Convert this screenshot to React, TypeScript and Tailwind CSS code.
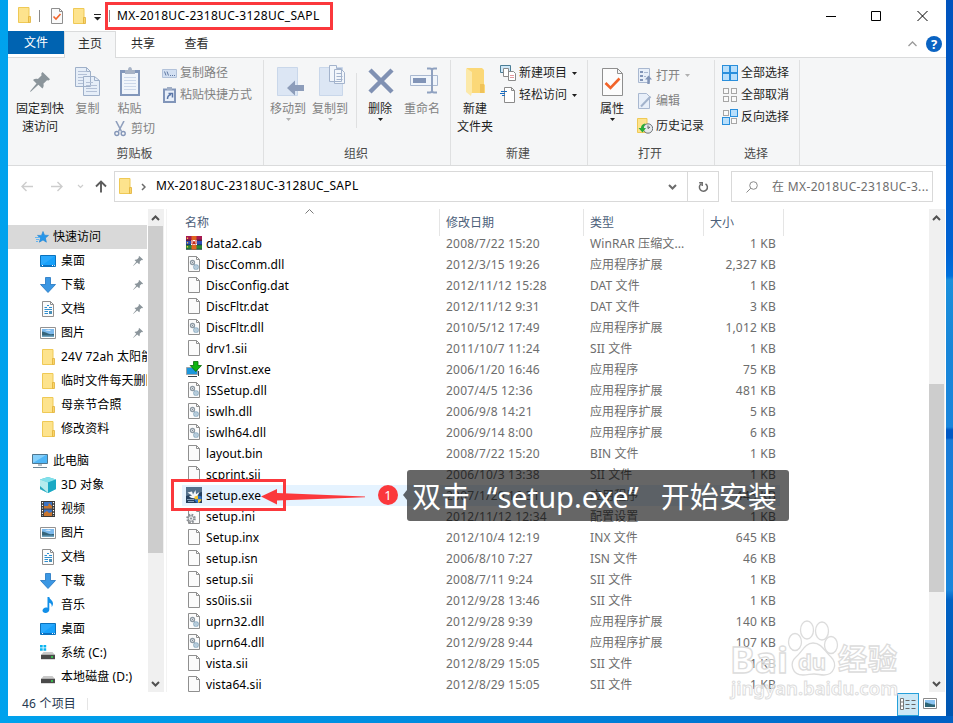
import type { ReactNode } from "react"

interface FileRow {
  icon: string
  name: string
  date: string
  type: string
  size: string
}

interface NavEntry {
  icon: string
  label: string
  pinned?: boolean
}

const files: FileRow[] = [
  { icon: "rar", name: "data2.cab", date: "2008/7/22 15:20", type: "WinRAR 压缩文...", size: "1 KB" },
  { icon: "dll", name: "DiscComm.dll", date: "2012/3/15 19:26", type: "应用程序扩展", size: "2,327 KB" },
  { icon: "file", name: "DiscConfig.dat", date: "2012/11/12 15:28", type: "DAT 文件", size: "1 KB" },
  { icon: "file", name: "DiscFltr.dat", date: "2012/11/12 9:31", type: "DAT 文件", size: "3 KB" },
  { icon: "dll", name: "DiscFltr.dll", date: "2010/5/12 17:49", type: "应用程序扩展", size: "1,012 KB" },
  { icon: "file", name: "drv1.sii", date: "2011/10/7 11:24", type: "SII 文件", size: "1 KB" },
  { icon: "inst", name: "DrvInst.exe", date: "2006/1/20 16:46", type: "应用程序", size: "75 KB" },
  { icon: "dll", name: "ISSetup.dll", date: "2007/4/5 12:36", type: "应用程序扩展", size: "481 KB" },
  { icon: "dll", name: "iswlh.dll", date: "2006/9/8 14:21", type: "应用程序扩展", size: "5 KB" },
  { icon: "dll", name: "iswlh64.dll", date: "2006/9/14 8:00", type: "应用程序扩展", size: "6 KB" },
  { icon: "file", name: "layout.bin", date: "2008/7/22 15:20", type: "BIN 文件", size: "1 KB" },
  { icon: "file", name: "scprint.sii", date: "2006/10/3 13:38", type: "SII 文件", size: "1 KB" },
  { icon: "setup", name: "setup.exe", date: "2007/1/20 16:31", type: "应用程序", size: "445 KB" },
  { icon: "ini", name: "setup.ini", date: "2012/11/12 12:34", type: "配置设置", size: "1 KB" },
  { icon: "file", name: "Setup.inx", date: "2012/10/4 12:19", type: "INX 文件", size: "645 KB" },
  { icon: "file", name: "setup.isn", date: "2006/8/10 7:27", type: "ISN 文件", size: "46 KB" },
  { icon: "file", name: "setup.sii", date: "2008/7/11 9:24", type: "SII 文件", size: "1 KB" },
  { icon: "file", name: "ss0iis.sii", date: "2012/9/28 13:46", type: "SII 文件", size: "1 KB" },
  { icon: "dll", name: "uprn32.dll", date: "2012/9/28 9:39", type: "应用程序扩展", size: "140 KB" },
  { icon: "dll", name: "uprn64.dll", date: "2012/9/28 9:44", type: "应用程序扩展", size: "107 KB" },
  { icon: "file", name: "vista.sii", date: "2012/8/29 15:05", type: "SII 文件", size: "1 KB" },
  { icon: "file", name: "vista64.sii", date: "2012/8/29 15:05", type: "SII 文件", size: "1 KB" },
]

const quickAccess: NavEntry[] = [
  { icon: "desktop", label: "桌面", pinned: true },
  { icon: "download", label: "下载", pinned: true },
  { icon: "doc", label: "文档", pinned: true },
  { icon: "picture", label: "图片", pinned: true },
  { icon: "folder", label: "24V 72ah 太阳能" },
  { icon: "folder", label: "临时文件每天删除" },
  { icon: "folder", label: "母亲节合照" },
  { icon: "folder", label: "修改资料" },
]

const thisPc: NavEntry[] = [
  { icon: "cube", label: "3D 对象" },
  { icon: "video", label: "视频" },
  { icon: "picture", label: "图片" },
  { icon: "doc", label: "文档" },
  { icon: "download", label: "下载" },
  { icon: "music", label: "音乐" },
  { icon: "desktop", label: "桌面" },
  { icon: "sysdisk", label: "系统 (C:)" },
  { icon: "disk", label: "本地磁盘 (D:)" },
]

const page = (
  <path d="M2.500 .5h8l3 3v12h-11z M10.500 .5v3h3" fill="#fbfbfb" stroke="#8f8f8f" />
)

// 16x16 icons shared by the navigation pane and the file list
function Icon({ name }: { name: string }) {
  return (
    <svg width="16" height="16" viewBox="0 0 16 16" className="shrink-0">
      {name === "file" && page}
      {name === "dll" && (
        <>
          {page}
          <circle cx="6.500" cy="6.500" r="2" fill="#fff" stroke="#8d99a3" strokeWidth="1.300" />
          <circle cx="6.500" cy="6.500" r=".7" fill="#7e8b96" />
          <path d="M7.500 8l2 1.500" stroke="#8d99a3" />
          <circle cx="10" cy="11" r="2.200" fill="#e4f1fa" stroke="#96b4c8" strokeWidth="1.300" />
          <circle cx="10" cy="11" r=".8" fill="#7e9ab0" />
        </>
      )}
      {name === "ini" && (
        <>
          {page}
          <circle cx="5" cy="10.500" r="3.800" fill="none" stroke="#8a8f94" strokeWidth="2" strokeDasharray="1.700 1.300" />
          <circle cx="5" cy="10.500" r="2.800" fill="#e9eaeb" stroke="#90959a" />
          <circle cx="5" cy="10.500" r="1" fill="#8a8f94" />
        </>
      )}
      {name === "rar" && (
        <>
          <path d="M0 1h16v5H0z" fill="#a8194f" />
          <path d="M0 6h16v4H0z" fill="#2c4fb5" />
          <path d="M0 10h16v4.500H0z" fill="#2a8a35" />
          <path d="M0 5.200h16M0 9.800h16M0 14.200h16" stroke="#172a4a" strokeWidth=".8" />
          <path d="M5.500 1h5v13.500h-5z" fill="#e0641e" />
          <path d="M5 5h6v5H5z" fill="#fff" />
          <path d="M6 5v4h1.500V6.500h1V9H10V5" fill="none" stroke="#c42b1c" />
          <path d="M1.500 2.500v1.500M1.500 7v1.500M1.500 11v1.500" stroke="#f4c542" strokeWidth="1.200" />
        </>
      )}
      {name === "inst" && (
        <>
          <path d="M.5 6.500h11v7H.5z" fill="#1c97dc" stroke="#9aa3aa" />
          <path d="M2 15.500h9M12.500 10v5" stroke="#38444d" />
          <path d="M7.500 .5h4.500v4h3.500l-5.700 6L4.200 4.500h3.300z" fill="#10b410" stroke="#076b07" strokeWidth=".8" />
        </>
      )}
      {name === "setup" && (
        <>
          <path d="M0 0h16v16H0z" fill="#24405f" />
          <path d="M0 0h16v5L0 9z" fill="#54718c" />
          <path d="M1.500 5.500L6 4.500l1 3 2.500-4.500.5 4 3.500-2-2.500 5c-3 2-6 1.500-8-1l3-.5z" fill="#f3f7fb" />
          <path d="M1 12.500h7M2 14.500h6" stroke="#87a0b8" />
          <path d="M12 8.500l3.500 1v2.700H12z" fill="#2b76d2" />
          <path d="M8.500 12.200H12V16c-2-.7-3.300-2-3.500-3.800z" fill="#2b76d2" />
          <path d="M12 8.500v3.700H8.500V9.500zM12 12.200h3.500c-.2 1.800-1.500 3.100-3.500 3.800z" fill="#f7c431" />
        </>
      )}
      {name === "desktop" && (
        <>
          <path d="M.5 2.500h15v11H.5z" fill="#16a1fb" stroke="#0a72bd" />
          <path d="M1 13V3h14z" fill="#3db2ff" opacity=".5" />
          <path d="M1 12.500h14" stroke="#0b6fc2" />
          <path d="M2 12.500h1M12 12.500h1M14 12.500h.8" stroke="#fff" />
        </>
      )}
      {name === "download" && (
        <path d="M5.500 .5h5v7h5L8 15.500.5 7.500h5z" fill="#3b97e3" stroke="#2174c0" strokeWidth=".8" />
      )}
      {name === "doc" && (
        <>
          {page}
          <path d="M7 4.500h2M4.500 6.500H7M9 6.500h3M4.500 8.500h7.500M4.500 10.500H8M4.500 12.500H8" stroke="#2f8fd0" />
          <path d="M9 10h3v3H9z" fill="#4a90b8" />
        </>
      )}
      {name === "picture" && (
        <>
          <path d="M.5 2.500h15v11H.5z" fill="#fff" stroke="#929292" />
          <path d="M2 4h12v8H2z" fill="#7cb9ec" />
          <path d="M2 6.500c2 0 4 1 6 2s4 .5 6 .5v3H2z" fill="#35647a" />
          <path d="M2 10.500h12V12H2z" fill="#6fa3bf" />
          <path d="M5 5.500c2-1 5-1 6 .5z" fill="#e2f1fd" />
        </>
      )}
      {name === "folder" && (
        <>
          <path d="M2.500 .5h10.500v15H2.500z" fill="#fde38d" stroke="#efc955" />
          <path d="M12.500 9.500h2v6h-2z" fill="#fbd567" stroke="#dfb03a" strokeWidth=".8" />
        </>
      )}
      {name === "cube" && (
        <>
          <path d="M8 0l8 2.500V12l-8 4-8-4V2.500z" fill="#39bdd3" />
          <path d="M8 0l8 2.500-8 3-8-3z" fill="#82e0ea" />
          <path d="M0 2.500l8 3V16l-8-4z" fill="#b5ecee" />
          <path d="M0 9l8 7-8-4z" fill="#27a6bc" />
          <path d="M8 5.500l8-3V12l-8 4z" fill="#1ba9c4" />
        </>
      )}
      {name === "video" && (
        <>
          <path d="M1 0h14v16H1z" fill="#3a3a3a" />
          <path d="M4 1h8v6.500H4zM4 8.500h8V15H4z" fill="#3b73c4" />
          <path d="M4 5h4l1-3 3 3v2.500H4zM4 12l3-2 2 2 3-1v4H4z" fill="#c8752d" />
          <path d="M2.500 1v14M13.500 1v14" stroke="#fff" strokeWidth="1.200" strokeDasharray="1.200 1.500" />
        </>
      )}
      {name === "music" && (
        <path d="M7.500 0h1.800c.3 2.500 3.700 3.500 3.700 6.500 0 1.500-.6 2.700-1.300 3.500.3-2.500-.9-4-2.400-4.300v7c0 1.900-1.800 3.300-3.800 3.300-1.700 0-3-.9-3-2.400 0-1.700 1.700-3.100 3.500-3.100.5 0 1 .1 1.500.3z" fill="#128fe8" />
      )}
      {(name === "disk" || name === "sysdisk") && (
        <>
          <path d="M3.500 7h9l2.500 3H1z" fill="#c9c9c9" />
          <path d="M1 9.800h14v4.400H1z" fill="#4a4a4a" />
          <path d="M11 12h2" stroke="#35e04f" strokeWidth="1.500" />
        </>
      )}
      {name === "sysdisk" && (
        <path d="M0 0h2.700v2.500H0zM3.500 0h2.700v2.500H3.500zM0 3.300h2.700v2.500H0zM3.500 3.300h2.700v2.500H3.500z" fill="#0ab4f0" />
      )}
      {name === "star" && (
        <>
          <path d="M9 2.500l1.500 3.700 4 .2-3.100 2.600 1 4.200L9 11l-3.700 2.200 1.200-4L3.500 6.400h4z" fill="#2796ea" stroke="#1c83d4" strokeWidth=".6" />
          <path d="M1 8.500h5M2 10.500h3M2 12.500h2" stroke="#65b5ef" />
        </>
      )}
      {name === "pc" && (
        <>
          <path d="M.5 1.500h15v9H.5z" fill="#4fb6f7" stroke="#50778f" />
          <path d="M1 10V2h13z" fill="#86d0fb" />
          <path d="M6 11h4v2H6z" fill="#b4bec5" />
          <path d="M1 14.500h14" stroke="#6b8494" />
        </>
      )}
    </svg>
  )
}

function PinIcon({ size, color }: { size: number; color: string }) {
  return (
    <svg width={size} height={size} viewBox="0 0 20 20" className="shrink-0">
      <path d="M12.500 0L20 7.200l-1.400 1.200-1.600-.2-3.600 3.500c.6 1.800.2 3.600-1 4.800l-4-3.700L1 19.600l-1 .4.500-1.200 6-7.200L3 8c1.400-1.200 3.200-1.500 4.900-.9l3.600-3.700-.2-1.900z" fill={color} />
    </svg>
  )
}

function Caret({ color = "#1e1e1e" }: { color?: string }) {
  return (
    <svg width="5" height="3" viewBox="0 0 5 3" className="shrink-0">
      <path d="M0 0h5L2.500 3z" fill={color} />
    </svg>
  )
}

function Chevron({ up, color = "#505050" }: { up?: boolean; color?: string }) {
  return (
    <svg width="9" height="6" viewBox="0 0 9 6" className="shrink-0">
      <path d={up ? "M1 5l3.500-3.500L8 5" : "M1 1l3.500 3.500L8 1"} fill="none" stroke={color} strokeWidth="2" />
    </svg>
  )
}

function TitleBar() {
  return (
    <div className="flex h-[31px] items-center">
      <div className="ml-[8px] flex w-[91px] shrink-0 items-center">
        <div className="mb-px"><Icon name="folder" /></div>
        <div className="ml-[7px] h-3 w-px bg-[#8a8a8a]" />
        <svg width="12" height="16" viewBox="0 0 12 16" className="ml-[11px]">
          <path d="M.5 .5h8l3 3v12H.5z M8.500 .5v3h3" fill="#fafafa" stroke="#8f8f8f" />
          <path d="M2.500 8.500l2.500 2.500 4.500-5" fill="none" stroke="#f2642a" strokeWidth="1.600" />
        </svg>
        <div className="ml-[8px]"><Icon name="folder" /></div>
        <svg width="7" height="7" viewBox="0 0 7 7" className="mt-[3px] ml-[7px]">
          <path d="M0 .5h7" stroke="#222" />
          <path d="M0 3h7L3.500 6.500z" fill="#222" />
        </svg>
      </div>
      <div className="ml-[2px] h-3 w-px bg-[#8a8a8a]" />
      <span className="ml-[7px] tracking-[0.3px] text-black">MX-2018UC-2318UC-3128UC_SAPL</span>
      <svg width="110" height="12" viewBox="0 0 110 12" className="mr-[14px] ml-auto">
        <path d="M4 6.500h10M49.500 1.500h9v9h-9zM95.500 1l10 10M105.500 1l-10 10" fill="none" stroke="#000" />
      </svg>
    </div>
  )
}

function Tabs() {
  return (
    <div className="flex h-[27px] border-b border-[#dadbdc] text-[#2b2b2b]">
      <div className="h-[23px] w-[56px] bg-[#0063b1] text-center leading-[23px] text-white">文件</div>
      <div className="h-[27px] w-[52px] border-x border-t border-[#dadbdc] bg-[#f5f6f7] text-center leading-[24px]">主页</div>
      <div className="w-[54px] text-center leading-[26px]">共享</div>
      <div className="w-[53px] text-center leading-[26px]">查看</div>
      <div className="mr-[4px] ml-auto flex items-center gap-[9px]">
        <svg width="9" height="6" viewBox="0 0 9 6">
          <path d="M.5 5l4-4 4 4" fill="none" stroke="#9a9a9a" strokeWidth="1.300" />
        </svg>
        <div className="h-4 w-4 rounded-full bg-[#0a63c2] text-center text-[13px] leading-4 font-bold text-white">?</div>
      </div>
    </div>
  )
}

function Group({ label, width, children }: { label: string; width: string; children: ReactNode }) {
  return (
    <div className={`flex shrink-0 flex-col border-r border-[#dfe0e1] ${width}`}>
      <div className="flex h-[84px]">{children}</div>
      <div className="h-[18px] pr-[2px] text-center leading-[20px] text-[#4a4a4a]">{label}</div>
    </div>
  )
}

function BigButton({ icon, lines, width, disabled, caret }: { icon: ReactNode; lines: string[]; width: string; disabled?: boolean; caret?: boolean }) {
  return (
    <div className={`flex shrink-0 flex-col items-center whitespace-nowrap ${width} ${disabled ? "text-[#828282]" : "text-[#1e1e1e]"}`}>
      <div className="flex h-[40px] items-center justify-center pt-[3px]">{icon}</div>
      {lines.map((line) => (
        <span key={line} className="h-[18px] leading-[18px]">{line}</span>
      ))}
      {caret && <Caret color={disabled ? "#b0b0b0" : "#1e1e1e"} />}
    </div>
  )
}

function SmallButton({ icon, label, height, disabled, caret }: { icon: ReactNode; label: string; height: string; disabled?: boolean; caret?: boolean }) {
  return (
    <div className={`flex items-center whitespace-nowrap ${height} ${disabled ? "text-[#828282]" : "text-[#1e1e1e]"}`}>
      <div className="mr-[3px] flex w-4 justify-center">{icon}</div>
      <span className="mr-[5px]">{label}</span>
      {caret && <Caret color={disabled ? "#b0b0b0" : "#1e1e1e"} />}
    </div>
  )
}

function SelectIcon({ on }: { on: number[] }) {
  return (
    <svg width="16" height="16" viewBox="0 0 16 16">
      {[0, 1, 2, 3].map((i) => (
        <rect
          key={i}
          x={(i % 2) * 8 + (on.includes(i) ? 0.5 : 1.5)}
          y={Math.floor(i / 2) * 8 + (on.includes(i) ? 0.5 : 1.5)}
          width={on.includes(i) ? 7 : 5}
          height={on.includes(i) ? 7 : 5}
          fill={on.includes(i) ? "#b9dffb" : "#fafafa"}
          stroke={on.includes(i) ? "#2a8fdc" : "#a6a6a6"}
        />
      ))}
    </svg>
  )
}

function Ribbon() {
  return (
    <div className="flex h-[108px] border-b border-[#dadbdc] bg-[#f5f6f7] pt-[2px]">
      <Group label="剪贴板" width="w-[256px]">
        <BigButton width="w-[64px]" icon={<PinIcon size={20} color="#8b959b" />} lines={["固定到快", "速访问"]} />
        <BigButton
          width="w-[31px]"
          disabled
          icon={
            <svg width="25" height="29" viewBox="0 0 25 29">
              <path d="M.5 .5h11l4 4v15H.5zM8.500 9.500h11l5 4v15h-16z" fill="#e6eef8" stroke="#9fb0c9" />
              <path d="M3 4.500h8M3 7.500h9M3 10.500h5M3 13.500h5M3 16.500h5M11 15.500h7M11 18.500h11M11 21.500h11M11 24.500h11" stroke="#b3c0d6" />
              <path d="M19.500 9.500v4h5M11.500 .5v4h4" fill="none" stroke="#9fb0c9" />
            </svg>
          }
          lines={["复制"]}
        />
        <div className="flex w-[58px] shrink-0 flex-col pl-[11px]">
          <BigButton
            width="w-[31px]"
            disabled
            icon={
              <svg width="20" height="29" viewBox="0 0 20 29">
                <path d="M0 3h20v26H0z" fill="#8297bb" />
                <path d="M2 6h16v21H2z" fill="#f0f5fb" />
                <path d="M4 10.500h12M4 13.500h12M4 16.500h12M4 19.500h12M4 22.500h12" stroke="#ccd8ea" />
                <path d="M5 3h3c0-4 4-4 4 0h3v4H5z" fill="#a7b3c6" />
              </svg>
            }
            lines={["粘贴"]}
          />
          <div className="mt-px flex h-[20px] items-center text-[#828282]">
            <svg width="12" height="16" viewBox="0 0 12 16" className="mr-[5px] shrink-0">
              <path d="M2 0l5.500 10.500M10 0L4.500 10.500" fill="none" stroke="#8f9fbd" strokeWidth="1.600" />
              <circle cx="2.800" cy="12.500" r="2" fill="none" stroke="#8496b8" strokeWidth="1.400" />
              <circle cx="9.200" cy="12.500" r="2" fill="none" stroke="#8496b8" strokeWidth="1.400" />
            </svg>
            <span className="whitespace-nowrap">剪切</span>
          </div>
        </div>
        <div className="pt-[2px]">
          <SmallButton
            height="h-[22px]"
            disabled
            icon={
              <svg width="15" height="9" viewBox="0 0 15 9">
                <path d="M.5 .5h14v8H.5z" fill="#d3e0f2" stroke="#b2c2da" />
                <path d="M2.500 2.500l1.500 4M5 2.500l1.500 4M8 6.500h1M10 6.500h1M12 6.500h1" stroke="#5f78a3" />
              </svg>
            }
            label="复制路径"
          />
          <SmallButton
            height="h-[22px]"
            disabled
            icon={
              <svg width="13" height="16" viewBox="0 0 13 16">
                <path d="M1 2.500h11v12.500H1z" fill="#e8eff9" stroke="#8195b9" strokeWidth="2" />
                <path d="M4 0h5v3H4z" fill="#a0aec6" />
                <path d="M4.500 12c0-3 1-4 3.500-4.500M5.500 6.500h4v4" fill="none" stroke="#5b77a8" strokeWidth="1.500" />
              </svg>
            }
            label="粘贴快捷方式"
          />
        </div>
      </Group>

      <Group label="组织" width="w-[187px]">
        <BigButton
          width="ml-[3px] w-[42px]"
          disabled
          caret
          icon={
            <svg width="27" height="29" viewBox="0 0 27 29" className="ml-[4px]">
              <path d="M.5 .5h20v28H.5z" fill="#dce6f4" stroke="#c9d7ea" />
              <path d="M10 21l8-7.500v4.500h9v6h-9v4.500z" fill="#8d9dba" />
            </svg>
          }
          lines={["移动到"]}
        />
        <BigButton
          width="w-[42px]"
          disabled
          caret
          icon={
            <svg width="27" height="31" viewBox="0 0 27 31" className="-mt-[2px] ml-[5px]">
              <path d="M.5 2.500h23v28H.5z" fill="#dce6f4" stroke="#c9d7ea" />
              <path d="M10.500 .5h7v3h5v13h-12zM15.500 4.500h7l3 3v11h-10z" fill="#f2f6fb" stroke="#a3b3cc" />
              <path d="M17.500 8.500h5M17.500 11.500h6M17.500 14.500h6" stroke="#a3b3cc" />
            </svg>
          }
          lines={["复制到"]}
        />
        <div className="mt-[13px] ml-[5px] h-[55px] w-px bg-[#dfe0e1]" />
        <BigButton
          width="ml-[2px] w-[42px]"
          caret
          icon={
            <svg width="26" height="26" viewBox="0 0 26 26" className="-mt-[2px] ml-[2px]">
              <path d="M2 2l22 22M24 2L2 24" stroke="#8091b3" strokeWidth="4.500" />
            </svg>
          }
          lines={["删除"]}
        />
        <BigButton
          width="w-[42px]"
          disabled
          icon={
            <svg width="28" height="27" viewBox="0 0 28 27" className="-mt-[2px] ml-[4px]">
              <path d="M.5 8.500h27v10H.5z" fill="#f0f5fb" stroke="#a9b8d0" />
              <path d="M3 11h13v5H3z" fill="#8194b7" />
              <path d="M17 1.500h3c1.500 0 2 .5 2 2v20c0 1.500-.5 2-2 2h-3M27 1.500h-3c-1.500 0-2 .5-2 2M27 25.500h-3c-1.500 0-2-.5-2-2" fill="none" stroke="#8fa1c0" strokeWidth="2" />
            </svg>
          }
          lines={["重命名"]}
        />
      </Group>

      <Group label="新建" width="w-[137px]">
        <BigButton
          width="ml-[3px] w-[42px]"
          icon={
            <svg width="19" height="28" viewBox="0 0 19 28">
              <path d="M1 0h15l2 2v14l1 1v8H5L1 21z" fill="#fbd878" />
              <path d="M0 0l6 4v20l-1 4-5-4z" fill="#fce9a9" />
              <path d="M14 16h4v9h-4z" fill="#f0c35a" />
            </svg>
          }
          lines={["新建", "文件夹"]}
        />
        <div className="ml-[4px] pt-[2px]">
          <SmallButton
            height="h-[22px]"
            caret
            icon={
              <svg width="16" height="16" viewBox="0 0 16 16">
                <path d="M.5 .5h10v7H.5z" fill="#cfe8f8" stroke="#4a7d96" />
                <path d="M3.500 3.500h5v8h-5zM8.500 6.500h5l2 2v7h-7z" fill="#fff" stroke="#8a8a8a" />
                <path d="M10 10.500h4M10 12.500h4" stroke="#e39aa0" />
              </svg>
            }
            label="新建项目"
          />
          <SmallButton
            height="h-[22px]"
            caret
            icon={
              <svg width="16" height="16" viewBox="0 0 16 16">
                <path d="M4.500 .5h7l3 3v12h-10z M11.500 .5v3h3" fill="#fff" stroke="#8a8a8a" />
                <path d="M1 4.500h6M0 6.500h5M2 8.500h3" stroke="#1b6ec2" strokeWidth="1.200" />
              </svg>
            }
            label="轻松访问"
          />
        </div>
      </Group>

      <Group label="打开" width="w-[127px]">
        <BigButton
          width="ml-[3px] w-[42px]"
          caret
          icon={
            <svg width="21" height="28" viewBox="0 0 21 28">
              <path d="M.5 .5h15l5 5v22H.5z M15.500 .5v5h5" fill="#fcfcfc" stroke="#8f8f8f" />
              <path d="M3.500 15l5 5 9-9.500" fill="none" stroke="#f2642a" strokeWidth="2.600" />
            </svg>
          }
          lines={["属性"]}
        />
        <div className="ml-[4px] pt-[3px]">
          <SmallButton
            height="h-[25px]"
            disabled
            caret
            icon={
              <svg width="14" height="16" viewBox="0 0 14 16">
                <path d="M.5 .5h11v14H.5z" fill="#e8eff9" stroke="#a9b8d0" />
                <path d="M2 3h3v2H2zM2 7h3v2H2zM2 11h3v2H2z" fill="#8194b7" />
                <path d="M6 4.500h4M6 8.500h2" stroke="#a9b8d0" />
                <path d="M10.500 7.500l3.500 4h-2.300V16H9.300v-4.500H7z" fill="#8194b7" />
              </svg>
            }
            label="打开"
          />
          <SmallButton
            height="h-[25px]"
            disabled
            icon={
              <svg width="14" height="16" viewBox="0 0 14 16">
                <path d="M.5 .5h8l3 3v12H.5z" fill="#e8eff9" stroke="#a9b8d0" />
                <path d="M3 13.500L12.500 3.500" stroke="#a3b3cc" strokeWidth="2" />
              </svg>
            }
            label="编辑"
          />
          <SmallButton
            height="h-[25px]"
            icon={
              <svg width="16" height="16" viewBox="0 0 16 16" className="shrink-0">
                <path d="M.5 .5H10v14H.5z" fill="#fde38d" stroke="#efc955" />
                <circle cx="11" cy="10.500" r="4.700" fill="#e6e9eb" stroke="#6f7579" />
                <path d="M11 7.500v3l2-1.500" fill="none" stroke="#565b5f" />
                <path d="M8 5.500c-3 .5-4 2.500-4 4.500H1.500l4 4.500 3.500-4.500H6.700c0-2 .5-3 2-4z" fill="#28ad3a" />
              </svg>
            }
            label="历史记录"
          />
        </div>
      </Group>

      <Group label="选择" width="w-[85px]">
        <div className="ml-[7px] pt-[2px]">
          <SmallButton height="h-[22px]" icon={<SelectIcon on={[0, 1, 2, 3]} />} label="全部选择" />
          <SmallButton height="h-[22px]" icon={<SelectIcon on={[]} />} label="全部取消" />
          <SmallButton height="h-[22px]" icon={<SelectIcon on={[1, 2]} />} label="反向选择" />
        </div>
      </Group>
    </div>
  )
}

function AddressBar() {
  return (
    <div className="flex h-[43px] pt-[5px]">
      <svg width="106" height="31" viewBox="0 0 106 31" className="shrink-0">
        <path d="M25 15.500H14M18.500 11L14 15.500l4.500 4.500M43 15.500h11M49.500 11l4.500 4.500-4.500 4.500" fill="none" stroke="#cdcdcd" strokeWidth="1.400" />
        <path d="M70 14l2.500 2.500L75 14" fill="none" stroke="#cdcdcd" strokeWidth="1.200" />
        <path d="M93 21.500V10.500M88 15.500l5-5 5 5" fill="none" stroke="#5c5c5c" strokeWidth="1.900" />
      </svg>
      <div className="flex h-[31px] w-[605px] shrink-0 items-center border border-[#d9d9d9]">
        <div className="mb-px ml-[2px]"><Icon name="folder" /></div>
        <svg width="5" height="8" viewBox="0 0 5 8" className="ml-[8px]">
          <path d="M1 1l3 3-3 3" fill="none" stroke="#6b6b6b" strokeWidth="1.500" />
        </svg>
        <span className="mb-px ml-[10px] tracking-[0.3px] text-black">MX-2018UC-2318UC-3128UC_SAPL</span>
        <div className="mr-[10px] ml-auto"><Chevron color="#6b6b6b" /></div>
        <div className="flex h-full w-[31px] items-center justify-center border-l border-[#d9d9d9]">
          <svg width="11" height="12" viewBox="0 0 11 12">
            <path d="M7.500 2.800A4 4 0 1 1 3 3M1.200 1.800H4.200V5" fill="none" stroke="#6b6b6b" strokeWidth="1.500" />
          </svg>
        </div>
      </div>
      <div className="ml-[12px] flex h-[31px] w-[202px] shrink-0 items-center border border-[#d9d9d9] text-[#6d6d6d]">
        <svg width="12" height="12" viewBox="0 0 12 12" className="ml-[14px] shrink-0">
          <circle cx="7.500" cy="4.500" r="3.800" fill="none" stroke="#8a8a8a" />
          <path d="M4.800 7.200L.5 11.500" stroke="#8a8a8a" />
        </svg>
        <span className="ml-[14px] tracking-[0.35px] whitespace-nowrap">在 MX-2018UC-2318UC-3...</span>
      </div>
    </div>
  )
}

function NavItem({ icon, label, pinned }: NavEntry) {
  return (
    <div className="flex h-6 items-center overflow-hidden pl-[32px] whitespace-nowrap">
      <Icon name={icon} />
      <span className="ml-[5px] tracking-[0.1px]">{label}</span>
      {pinned && (
        <div className="mr-[4px] ml-auto">
          <PinIcon size={10} color="#8b959b" />
        </div>
      )}
    </div>
  )
}

function NavPane() {
  return (
    <div className="w-[139px] shrink-0 overflow-hidden pt-[16px] text-black">
      <div className="flex h-6 items-center bg-[#d9d9d9] pl-[26px]">
        <Icon name="star" />
        <span className="ml-[3px]">快速访问</span>
      </div>
      {quickAccess.map((entry) => (
        <NavItem key={entry.label} {...entry} />
      ))}
      <div className="mt-2 flex h-6 items-center pl-[24px]">
        <Icon name="pc" />
        <span className="ml-[5px]">此电脑</span>
      </div>
      {thisPc.map((entry) => (
        <NavItem key={entry.label} {...entry} />
      ))}
    </div>
  )
}

function Scrollbar({ thumb }: { thumb: string }) {
  return (
    <div className="flex h-[483px] w-4 shrink-0 flex-col bg-[#f0f0f0]">
      <div className="flex h-[17px] shrink-0 items-center justify-center pr-px"><Chevron up /></div>
      <div className={`w-[15px] bg-[#cdcdcd] ${thumb}`} />
      <div className="mt-auto flex h-[17px] shrink-0 items-center justify-center pr-px"><Chevron /></div>
    </div>
  )
}

function FileList() {
  return (
    <div className="flex-1">
      <div className="flex h-[24px] text-[#4c607a]">
        <div className="flex h-[27px] w-[273px] justify-between border-r border-[#e5e5e5] pl-[18px] leading-[28px]">
          名称
          <svg width="9" height="5" viewBox="0 0 9 5" className="mr-[125px]">
            <path d="M.5 4.500l4-4 4 4" fill="none" stroke="#7a7a7a" />
          </svg>
        </div>
        <div className="h-[27px] w-[144px] border-r border-[#e5e5e5] pl-[6px] leading-[28px]">修改日期</div>
        <div className="h-[27px] w-[120px] border-r border-[#e5e5e5] pl-[6px] leading-[28px]">类型</div>
        <div className="h-[27px] w-[80px] border-r border-[#e5e5e5] pl-[6px] leading-[28px]">大小</div>
      </div>
      {files.map((file) => (
        <div
          key={file.name}
          className={`ml-[15px] flex h-[21px] w-[598px] items-center whitespace-nowrap text-[#6d6d6d] ${file.name === "setup.exe" ? "bg-[#e5f3ff]" : ""}`}
        >
          <div className="flex w-[264px] items-center pl-[4px] text-black">
            <div className="mb-px"><Icon name={file.icon} /></div>
            <span className="ml-[4px] tracking-[0.08px]">{file.name}</span>
          </div>
          <span className="w-[144px] tracking-[0.2px]">{file.date}</span>
          <span className="w-[110px] tracking-[0.1px]">{file.type}</span>
          <span className="w-[76px] text-right tracking-[0.2px]">{file.size}</span>
        </div>
      ))}
    </div>
  )
}

function StatusBar() {
  return (
    <div className="flex h-[24px] items-center">
      <span className="ml-[14px] tracking-[0.2px] text-[#26384f]">46 个项目</span>
      <div className="ml-[11px] h-3 w-px bg-[#e5e5e5]" />
      <div className="ml-auto flex h-[23px] w-[22px] items-center justify-center border border-[#26a0da] bg-[#cce8f6]">
        <svg width="16" height="12" viewBox="0 0 16 12">
          <path d="M.5 .5h3v11h-3zM.5 4h3M.5 8h3" fill="#fff" stroke="#777" />
          <path d="M5.500 2.500h4M11.500 2.500h4M5.500 6.500h4M11.500 6.500h4M5.500 10.500h4M11.500 10.500h4" stroke="#666" />
        </svg>
      </div>
      <svg width="14" height="11" viewBox="0 0 14 11" className="mr-[9px] mb-[2px] ml-[4px]">
        <path d="M.5 .5h13v10H.5z" fill="#fff" stroke="#8a8a8a" />
        <path d="M2 2h10v7H2z" fill="#8cc4f2" />
        <path d="M2 4.500c3 0 5 2 10 2V9H2z" fill="#2f6575" />
      </svg>
    </div>
  )
}

function Annotations() {
  return (
    <>
      <div className="absolute top-[2px] left-[105px] h-[28px] w-[228px] border-3 border-[#fb383c]" />
      <div className="absolute top-[479px] left-[171px] h-[32px] w-[115px] border-3 border-[#fb383c]" />
      <svg width="106" height="16" viewBox="0 0 106 16" className="absolute top-[489px] left-[261px]">
        <path d="M0 7.500L16 0v4l88 3.500v.8L16 11.500v4z" fill="#fb383c" />
      </svg>
      <div className="absolute top-[485px] left-[378px] h-5 w-5 rounded-full bg-[#fb383c] text-center text-[13px] leading-5 text-white">1</div>
      <svg width="4" height="10" viewBox="0 0 4 10" className="absolute top-[490px] left-[403px]">
        <path d="M4 0v10L0 5z" fill="#000" opacity=".6" />
      </svg>
      <div className="absolute top-[470px] left-[407px] h-[51px] w-[382px] rounded-[3px] bg-black/60 pl-[5px] text-[29px] leading-[53px] whitespace-nowrap text-white">
        双击<span className="ml-[17px]">“setup.exe”</span><span className="ml-[22px]">开始安装</span>
      </div>
    </>
  )
}

function Watermark() {
  return (
    <svg width="175" height="85" viewBox="0 0 175 85" className="absolute top-[619px] left-[728px]" fontFamily="'Noto Sans', 'Noto Sans CJK SC', sans-serif">
      <g fill="#fff" fillOpacity=".6" stroke="#dcdcdc" strokeWidth="1.300">
        <ellipse cx="67" cy="23" rx="6.500" ry="8.500" />
        <ellipse cx="79" cy="11" rx="6.500" ry="9" />
        <ellipse cx="94" cy="12" rx="6.500" ry="9" />
        <ellipse cx="103" cy="26" rx="6.500" ry="8.500" />
        <path d="M85 24c-8 0-11 9-17 14-7 6-4 18 7 18 5 0 7-1 11-1s6 1 10 1c10 0 14-11 7-18-6-5-9-14-18-14z" />
        <text x="2" y="54" fontSize="36" fontWeight="700" textLength="58" lengthAdjust="spacingAndGlyphs">Bai</text>
        <text x="70" y="51" fontSize="22" fontWeight="700" textLength="28">du</text>
        <text x="110" y="51" fontSize="29" fontWeight="700" textLength="59">经验</text>
        <text x="3" y="76" fontSize="18" fontWeight="600" strokeWidth=".9" textLength="167" lengthAdjust="spacingAndGlyphs">jingyan.baidu.com</text>
      </g>
    </svg>
  )
}

export default function App() {
  return (
    <div className="relative flex h-[723px] w-[953px] overflow-hidden bg-[linear-gradient(90deg,#00a2ed_0%,#0086dc_55%,#0060c4_100%)] pl-[8px] font-['Noto_Sans','Noto_Sans_CJK_SC',sans-serif] text-[12px] leading-[16px]">
      <div className="h-[716px] w-[938px] shrink-0 bg-white">
        <TitleBar />
        <Tabs />
        <Ribbon />
        <AddressBar />
        <div className="flex h-[483px]">
          <NavPane />
          <div className="ml-px"><Scrollbar thumb="h-[327px]" /></div>
          <div className="ml-[2px] w-px bg-[#f3f3f3]" />
          <FileList />
          <div className="mr-px"><Scrollbar thumb="mt-[158px] h-[208px]" /></div>
        </div>
        <StatusBar />
      </div>
      {/* strip of wallpaper right of the window */}
      <div className="h-[716px] flex-1 bg-[linear-gradient(180deg,#0053bd_0px,#0062d2_250px,#0070dc_276px,#1b90dc_280px,#1886d8_350px,#1a86dc_427px,#0058c4_430px,#0058c4_438px,#1a7cd8_440px,#1a86dc_590px,#0062c4_600px,#0055b0_716px)]" />
      <Annotations />
      <Watermark />
    </div>
  )
}
